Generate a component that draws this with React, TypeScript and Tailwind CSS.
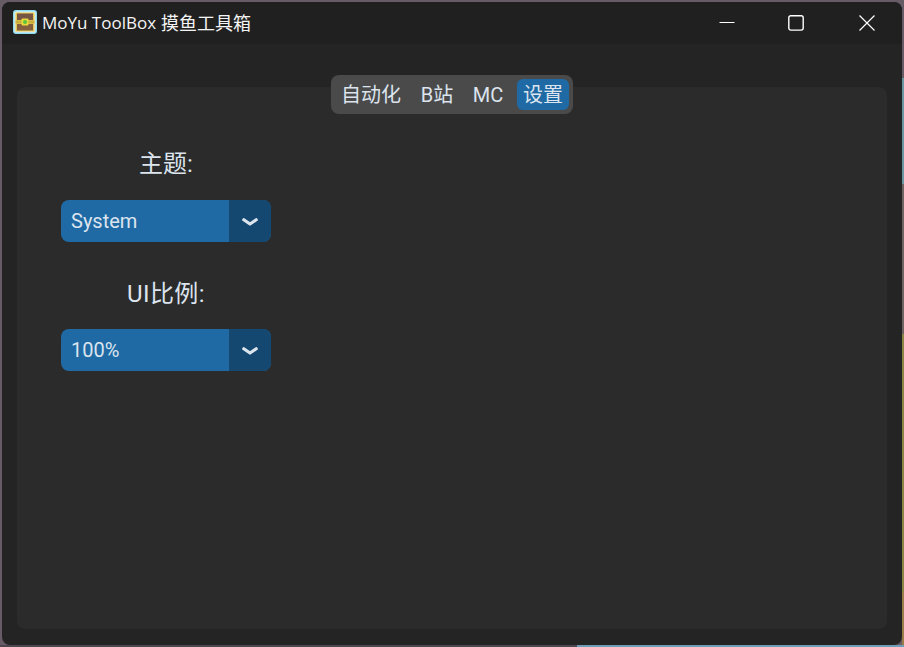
import React from "react";

const cjk = "font-['Roboto','Noto_Sans_CJK_SC',sans-serif]";

function Chevron() {
  return (
    <svg className="mt-[2px]" width="16" height="9" viewBox="0 0 16 9" fill="none" aria-hidden="true">
      <path d="M1.8 1.8 L8 6 L14.2 1.8" stroke="#dce4ee" strokeWidth="3.2" strokeLinecap="round" strokeLinejoin="round" />
    </svg>
  );
}

function Select({ value }: { value: string }) {
  return (
    <div className="flex h-[42px] w-[210px] overflow-hidden rounded-[8px] bg-[#1f6aa5]">
      <div className="flex flex-1 items-center pl-[10px] text-[20px] text-[#dce4ee]">{value}</div>
      <div className="flex w-[42px] items-center justify-center bg-[#144870]">
        <Chevron />
      </div>
    </div>
  );
}

function ChestIcon() {
  return (
    <svg width="24" height="24" viewBox="0 0 24 24" aria-hidden="true">
      <rect x="0" y="0" width="24" height="24" rx="3" fill="#8fdcf0" />
      <rect x="1.5" y="1.5" width="21" height="21" rx="1.5" fill="#e8f4f4" />
      <rect x="2.5" y="2.5" width="19" height="19" fill="#e8c850" />
      <rect x="4" y="3.5" width="16" height="6.5" fill="#775545" />
      <rect x="4" y="14" width="16" height="6.5" fill="#85603f" />
      <rect x="2.5" y="10.5" width="19" height="3" fill="#c9ae3c" />
      <rect x="8.5" y="8.5" width="7" height="7" rx="1" fill="#e8d83c" />
      <circle cx="12" cy="12" r="2" fill="#5cc43c" />
    </svg>
  );
}

export default function App() {
  return (
    <div className={`relative h-[647px] w-[904px] overflow-hidden bg-[#675c66] ${cjk}`}>
      <div className="absolute right-0 top-0 flex h-full w-[2px] flex-col">
        <div className="h-[78px] bg-[#675c66]" />
        <div className="h-[106px] bg-[#6b97a3]" />
        <div className="h-[150px] bg-[#6e6463]" />
        <div className="h-[258px] bg-[#8a8545]" />
        <div className="flex-1 bg-[#9b7d48]" />
      </div>
      <div className="absolute bottom-0 left-0 flex h-[2px] w-full">
        <div className="w-[577px] bg-[#4d4750]" />
        <div className="flex-1 bg-[#6f9db5]" />
      </div>

      <div className="relative mx-[2px] mb-[2px] mt-[2px] flex h-[643px] flex-col overflow-hidden rounded-[8px] bg-[#242424]">
        <header className="flex h-[42px] shrink-0 items-center bg-[#202020] pl-[11px]">
          <div className="flex items-center pb-[2px]">
            <ChestIcon />
            <span className="ml-[5px] font-['Open_Sans','Noto_Sans_CJK_SC',sans-serif] text-[17px] leading-none text-[#f4f4f4]">
              MoYu ToolBox
            </span>
            <span className="ml-[5px] font-['Noto_Sans_CJK_SC',sans-serif] text-[18px] leading-none text-[#f4f4f4]">
              摸鱼工具箱
            </span>
          </div>
          <div className="ml-auto flex h-full text-white">
            <button className="flex w-[70px] items-center justify-center pl-[3px]" aria-label="minimize">
              <svg width="16" height="16" viewBox="0 0 16 16" fill="none">
                <path d="M0.5 7.5 H15.5" stroke="#ffffff" strokeWidth="1" />
              </svg>
            </button>
            <button className="flex w-[72px] items-center justify-center" aria-label="maximize">
              <svg width="16" height="16" viewBox="0 0 16 16" fill="none">
                <rect x="0.8" y="0.7" width="14.4" height="14.4" rx="2" stroke="#ffffff" strokeWidth="1.4" />
              </svg>
            </button>
            <button className="flex w-[70px] items-center justify-center" aria-label="close">
              <svg width="16" height="16" viewBox="0 0 16 16" fill="none">
                <path d="M0.5 0.5 L15.5 15.5 M15.5 0.5 L0.5 15.5" stroke="#ffffff" strokeWidth="1.2" />
              </svg>
            </button>
          </div>
        </header>

        <main className="flex flex-1 flex-col px-[15px] pb-[16px] pt-[31px]">
          <nav className="relative z-10 mx-auto -mb-[27px] flex h-[39px] w-[242px] items-center rounded-[8px] bg-[#4a4a4a] px-[4px] text-[20px] text-[#dce4ee]">
            <span className="flex w-[72px] justify-center">自动化</span>
            <span className="flex w-[60px] justify-center">B站</span>
            <span className="flex w-[42px] justify-center">MC</span>
            <span className="ml-[8px] flex h-[31px] w-[52px] items-center justify-center rounded-[6px] bg-[#1f6aa5]">设置</span>
          </nav>
          <section className="flex-1 rounded-[8px] bg-[#2b2b2b] pl-[44px] pt-[61px]">
            <div className="flex w-[210px] flex-col items-center">
              <div className="text-[24px] leading-[33px] text-[#dce4ee]">主题:</div>
              <div className="mt-[19px]"><Select value="System" /></div>
              <div className="mt-[36px] text-[24px] leading-[33px] tracking-[0.4px] text-[#dce4ee]">UI比例:</div>
              <div className="mt-[18px]"><Select value="100%" /></div>
            </div>
          </section>
        </main>
      </div>
    </div>
  );
}
